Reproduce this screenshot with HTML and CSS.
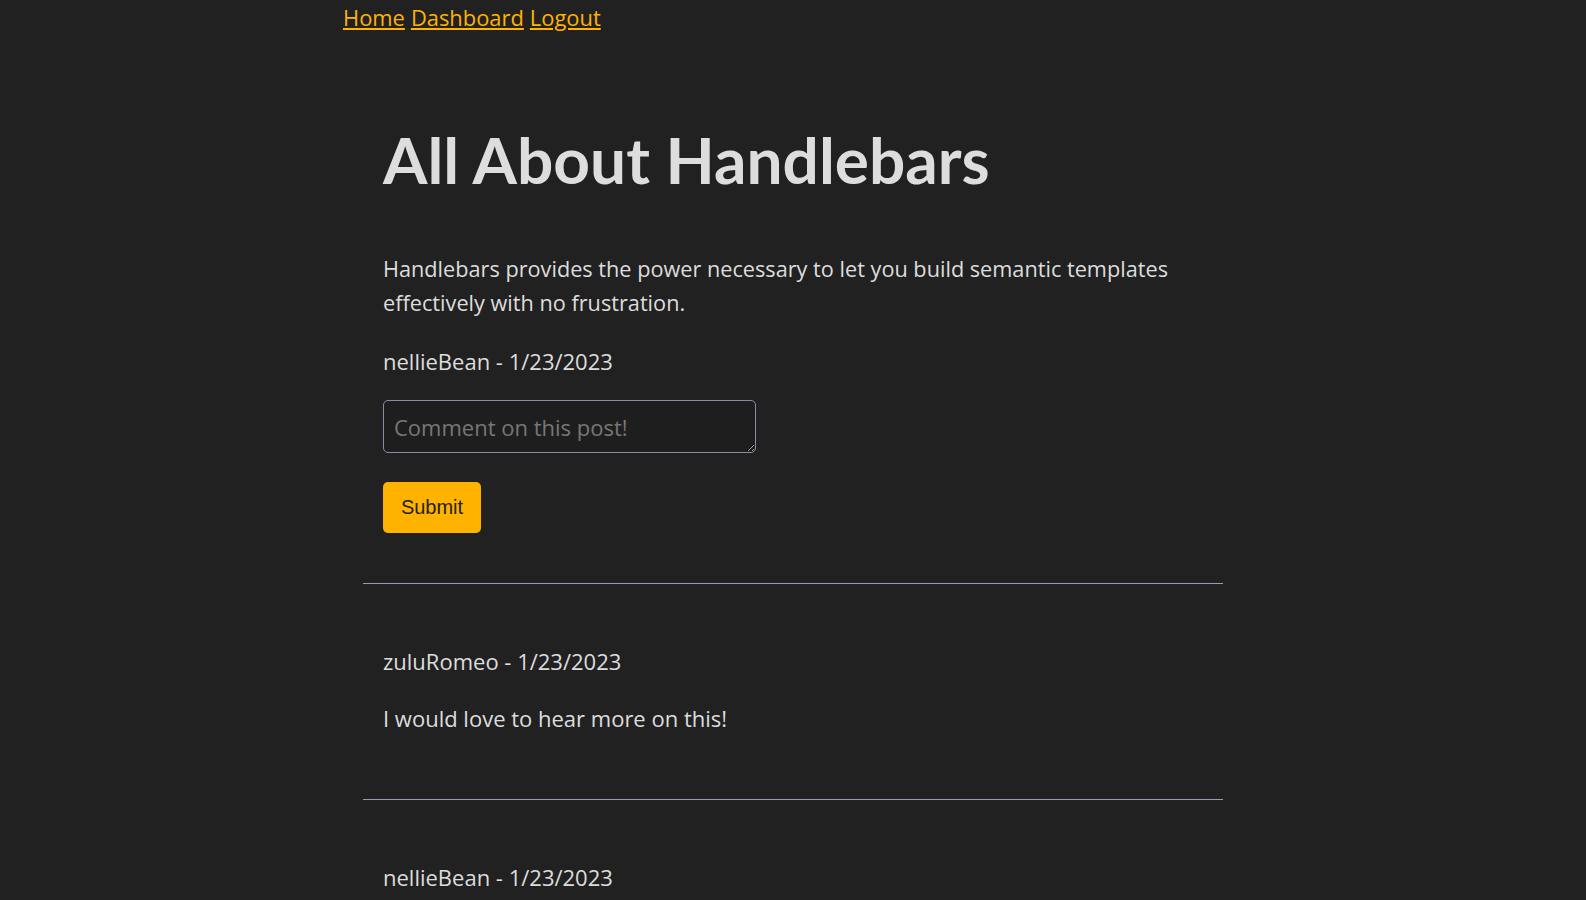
FILE: index.html
```html
<!DOCTYPE html>
<html lang="en">
<head>
<meta charset="utf-8">
<title>All About Handlebars</title>
<link rel="stylesheet" href="styles.css">
</head>
<body>
<div class="container">
  <nav class="nav">
    <a href="#">Home</a>
    <a href="#">Dashboard</a>
    <a href="#">Logout</a>
  </nav>
  <main class="main">
    <article class="post">
      <h1 class="post-title">All About Handlebars</h1>
      <p class="post-body">Handlebars provides the power necessary to let you build semantic templates effectively with no frustration.</p>
      <p class="meta">nellieBean - 1/23/2023</p>
      <form class="comment-form">
        <textarea class="comment-input" placeholder="Comment on this post!"></textarea>
        <button type="button" class="submit-btn">Submit</button>
      </form>
    </article>
    <hr class="divider">
    <section class="comment">
      <p class="meta">zuluRomeo - 1/23/2023</p>
      <p class="comment-text">I would love to hear more on this!</p>
    </section>
    <hr class="divider">
    <section class="comment">
      <p class="meta">nellieBean - 1/23/2023</p>
      <p class="comment-text">Handlebars is great!</p>
    </section>
  </main>
</div>
</body>
</html>
```

FILE: styles.css
```css
html, body {
  margin: 0;
  padding: 0;
  background: #212121;
}
body {
  color: #dddddd;
  font-family: "Open Sans", "Noto Sans", sans-serif;
  font-size: 22px;
}
.container {
  max-width: 900px;
  margin: 0 auto;
}
.nav {
  display: flex;
  gap: 6px;
  font-size: 21.9px;
  line-height: 34px;
  padding-top: 1px;
}
.nav a {
  color: #ffb300;
  text-decoration: underline;
}
.main {
  padding: 0 20px;
}
.post {
  padding: 0 20px;
}
.post-title {
  margin: 85px 0 52px;
  font-family: Lato, "Open Sans", sans-serif;
  font-size: 64px;
  line-height: 80px;
  font-weight: 700;
  color: #dddddd;
}
.post-body {
  margin: 0 0 24px;
  font-size: 21.7px;
  line-height: 34px;
}
.meta {
  margin: 0;
  line-height: 34px;
}
.comment-form {
  display: flex;
  flex-direction: column;
  align-items: flex-start;
  gap: 29px;
  margin-top: 22px;
  padding-bottom: 50px;
}
.comment-input {
  box-sizing: border-box;
  width: 373px;
  height: 53px;
  padding: 11px 10px 9px;
  background: #1e1e1e;
  color: #dddddd;
  border: 1px solid #8c8ca4;
  border-radius: 5px;
  font-family: "Open Sans", "Noto Sans", sans-serif;
  font-size: 22px;
  line-height: 30px;
}
.comment-input::placeholder {
  color: #777777;
}
.submit-btn {
  width: 98px;
  height: 51px;
  background: #ffb300;
  color: #222222;
  border: none;
  border-radius: 5px;
  font-family: "Liberation Sans", Arial, sans-serif;
  font-size: 20px;
}
.divider {
  margin: 0;
  border: none;
  border-top: 1px solid #9a9ab0;
}
.comment {
  padding: 60px 20px 64px;
}
.comment-text {
  margin: 23px 0 0;
  line-height: 34px;
}
```
